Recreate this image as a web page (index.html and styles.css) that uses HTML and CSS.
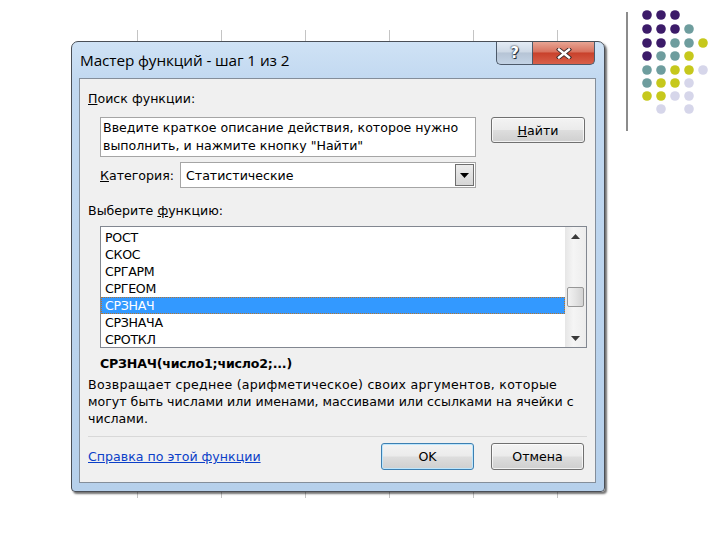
FILE: index.html
```html
<!DOCTYPE html>
<html>
<head>
<meta charset="utf-8">
<link rel="stylesheet" href="styles.css">
</head>
<body>
<div class="slide">
  <div class="deco-line"></div>
  <svg class="dots" width="72" height="112" viewBox="640 6 72 112">
    <g fill="#3c1b69">
      <circle cx="647" cy="15" r="4.8"/><circle cx="661" cy="15" r="4.8"/><circle cx="675" cy="15" r="4.8"/>
      <circle cx="647" cy="29" r="4.8"/><circle cx="661" cy="29" r="4.8"/><circle cx="675" cy="29" r="4.8"/>
      <circle cx="647" cy="43" r="4.8"/><circle cx="661" cy="43" r="4.8"/>
      <circle cx="647" cy="56" r="4.8"/>
    </g>
    <g fill="#6e9d9e">
      <circle cx="689" cy="29" r="4.8"/>
      <circle cx="675" cy="43" r="4.8"/><circle cx="689" cy="43" r="4.8"/>
      <circle cx="661" cy="56" r="4.8"/><circle cx="675" cy="56" r="4.8"/>
      <circle cx="647" cy="70" r="4.8"/><circle cx="661" cy="70" r="4.8"/>
      <circle cx="647" cy="83" r="4.8"/>
    </g>
    <g fill="#c6c81c">
      <circle cx="703" cy="43" r="4.8"/>
      <circle cx="689" cy="56" r="4.8"/>
      <circle cx="675" cy="70" r="4.8"/><circle cx="689" cy="70" r="4.8"/>
      <circle cx="661" cy="83" r="4.8"/><circle cx="675" cy="83" r="4.8"/>
      <circle cx="647" cy="96" r="4.8"/><circle cx="661" cy="96" r="4.8"/>
    </g>
    <g fill="#d6d6ea">
      <circle cx="703" cy="70" r="4.8"/>
      <circle cx="689" cy="83" r="4.8"/>
      <circle cx="675" cy="96" r="4.8"/><circle cx="689" cy="96" r="4.8"/>
      <circle cx="661" cy="109" r="4.8"/><circle cx="689" cy="109" r="4.8"/>
    </g>
  </svg>

  <div class="shot">
    <div class="dialog">
      <div class="titlebar">
        <span class="title">Мастер функций - шаг 1 из 2</span>
        <div class="caption-btns">
          <div class="cbtn help">?</div>
          <div class="cbtn close">
            <svg width="16" height="11" viewBox="0 0 16 11"><path d="M3 1.5 L13 9.5 M13 1.5 L3 9.5" stroke="#3a2a2a" stroke-width="4.2" stroke-linecap="square"/><path d="M3 1.5 L13 9.5 M13 1.5 L3 9.5" stroke="#ffffff" stroke-width="2.4" stroke-linecap="square"/></svg>
          </div>
        </div>
      </div>
      <div class="panel">
        <div class="label"><u>П</u>оиск функции:</div>
        <div class="search-row">
          <div class="search-box">Введите краткое описание действия, которое нужно<br>выполнить, и нажмите кнопку "Найти"</div>
          <div class="btn find"><u>Н</u>айти</div>
        </div>
        <div class="cat-row">
          <span class="cat-label"><u>К</u>атегория:</span>
          <div class="combo">
            <span class="combo-text">Статистические</span>
            <div class="combo-btn"><svg width="9" height="5" viewBox="0 0 9 5"><path d="M0 0 H9 L4.5 5 Z" fill="#000"/></svg></div>
          </div>
        </div>
        <div class="label choose">Выберите <u>ф</u>ункцию:</div>
        <div class="listbox">
          <ul class="items">
            <li>РОСТ</li>
            <li>СКОС</li>
            <li>СРГАРМ</li>
            <li>СРГЕОМ</li>
            <li class="sel">СРЗНАЧ</li>
            <li>СРЗНАЧА</li>
            <li>СРОТКЛ</li>
          </ul>
          <div class="scrollbar">
            <svg class="arrow" width="9" height="5" viewBox="0 0 9 5"><path d="M0 5 H9 L4.5 0 Z" fill="#3a3a3a"/></svg>
            <div class="track"><div class="thumb"></div></div>
            <svg class="arrow" width="9" height="5" viewBox="0 0 9 5"><path d="M0 0 H9 L4.5 5 Z" fill="#3a3a3a"/></svg>
          </div>
        </div>
        <div class="sig">СРЗНАЧ(число1;число2;...)</div>
        <div class="desc"><span class="desc-wide">Возвращает среднее (арифметическое) своих аргументов, которые</span><br>могут быть числами или именами, массивами или ссылками на ячейки с<br>числами.</div>
        <div class="sep"></div>
        <div class="footer">
          <a class="help-link">Справка по этой функции</a>
          <div class="btns">
            <div class="btn ok">OK</div>
            <div class="btn">Отмена</div>
          </div>
        </div>
      </div>
    </div>
  </div>
</div>
</body>
</html>
```

FILE: styles.css
```css
html, body {
  margin: 0;
  padding: 0;
}
body {
  width: 720px;
  height: 540px;
  background: #ffffff;
  overflow: hidden;
  font-family: "DejaVu Sans", sans-serif;
  font-size: 12.6px;
  color: #000;
}
.slide {
  position: relative;
  width: 720px;
  height: 540px;
  display: flex;
  flex-direction: column;
}
.deco-line {
  position: absolute;
  left: 626px;
  top: 12px;
  width: 2px;
  height: 119px;
  background: #8c8c8c;
}
.dots {
  position: absolute;
  left: 640px;
  top: 6px;
}
.shot {
  margin: 30px 0 0 70px;
  width: 536px;
  height: 468px;
  box-sizing: border-box;
  padding: 11px 0 0 1px;
  background-color: #fff;
  background-image: linear-gradient(to right, #c4c4c4 1px, transparent 1px);
  background-size: 84px 100%;
  background-position: 67px 0;
}
.dialog {
  width: 534px;
  height: 451px;
  box-sizing: border-box;
  border: 1px solid #4a4f57;
  border-radius: 7px 7px 4px 4px;
  background: linear-gradient(to bottom, #cfe2f5 0, #c1d8f0 40px, #b6d0eb 100%);
  box-shadow: 2px 2px 2px rgba(0,0,0,0.55);
  padding: 0 8px 8px 7px;
  display: flex;
  flex-direction: column;
}
.titlebar {
  height: 36px;
  display: flex;
  align-items: center;
  justify-content: space-between;
  padding-left: 1px;
  position: relative;
}
.title {
  font-family: "Open Sans", "DejaVu Sans", sans-serif;
  font-size: 15.3px;
  color: #000;
  letter-spacing: -0.1px;
}
.caption-btns {
  align-self: flex-start;
  display: flex;
  margin-right: 1px;
}
.cbtn {
  height: 22px;
  border: 1px solid #4d5a6a;
  border-top: none;
  display: flex;
  align-items: center;
  justify-content: center;
}
.help {
  width: 35px;
  border-radius: 0 0 0 5px;
  border-right: none;
  background: linear-gradient(to bottom, #e3ebf4 0, #cdd8e5 45%, #b6c4d5 50%, #c3d3e5 100%);
  font-family: "DejaVu Sans", sans-serif;
  font-weight: bold;
  font-size: 15px;
  color: #fff;
  text-shadow: 0 0 2px #2c3440, 0 0 1px #2c3440, 1px 1px 0 #2c3440;
}
.close {
  width: 61px;
  border-radius: 0 0 5px 0;
  background: linear-gradient(to bottom, #e8a493 0, #d8725e 45%, #c8412b 50%, #d8604a 100%);
}
.panel {
  flex: 1;
  border: 1px solid #848e9a;
  background: #f0f0f0;
  display: flex;
  flex-direction: column;
}
.label {
  margin: 11px 0 0 8px;
  line-height: 18px;
}
.search-row {
  display: flex;
  align-items: flex-start;
  margin-top: 9px;
}
.search-box {
  margin-left: 20px;
  width: 376px;
  height: 40px;
  box-sizing: border-box;
  border: 1px solid #a5a5a5;
  background: #fff;
  padding: 1px 2px;
  line-height: 18px;
  white-space: nowrap;
  overflow: hidden;
}
.btn {
  box-sizing: border-box;
  width: 93px;
  height: 27px;
  border: 1px solid #707070;
  border-radius: 3px;
  background: linear-gradient(to bottom, #f3f3f3 0, #ebebeb 48%, #dddddd 52%, #cfcfcf 100%);
  box-shadow: inset 0 0 0 1px rgba(255,255,255,0.7);
  display: flex;
  align-items: center;
  justify-content: center;
}
.find {
  margin-left: 15px;
  width: 94px;
  height: 26px;
}
.cat-row {
  display: flex;
  align-items: center;
  margin-top: 5px;
}
.cat-label {
  margin-left: 20px;
  width: 80px;
}
.combo {
  width: 296px;
  height: 26px;
  box-sizing: border-box;
  border: 1px solid #a5a5a5;
  background: #fff;
  display: flex;
  align-items: center;
  justify-content: space-between;
}
.combo-text {
  padding-left: 5px;
}
.combo-btn {
  width: 19px;
  height: 22px;
  margin-right: 1px;
  box-sizing: border-box;
  border: 1px solid #6e6e6e;
  background: linear-gradient(to bottom, #ececec, #d6d6d6);
  display: flex;
  align-items: center;
  justify-content: center;
}
.choose {
  margin-top: 14px;
}
.listbox {
  margin: 6px 0 0 20px;
  width: 487px;
  height: 122px;
  box-sizing: border-box;
  border: 1px solid #828790;
  background: #fff;
  display: flex;
}
.items {
  list-style: none;
  margin: 0;
  padding: 2px 0 0 0;
  flex: 1;
}
.items li {
  height: 17px;
  line-height: 17px;
  padding-left: 4px;
  letter-spacing: -0.3px;
}
.items li.sel {
  background: #3399ff;
  color: #fff;
  outline: 1px dotted #b7742e;
  outline-offset: -1px;
}
.scrollbar {
  width: 21px;
  background: linear-gradient(to right, #e6e6e6, #f5f5f5 40%, #ececec);
  display: flex;
  flex-direction: column;
  align-items: center;
  padding: 7px 0 6px;
  box-sizing: border-box;
}
.track {
  flex: 1;
  width: 100%;
  position: relative;
}
.thumb {
  position: absolute;
  left: 2px;
  right: 2px;
  top: 48px;
  height: 20px;
  border: 1px solid #979797;
  border-radius: 2px;
  box-sizing: border-box;
  background: linear-gradient(to right, #f2f2f2, #e4e4e4 50%, #d3d3d3);
}
.sig {
  margin: 7px 0 0 20px;
  line-height: 18px;
  font-weight: bold;
  letter-spacing: -0.2px;
}
.desc {
  margin: 3px 0 0 8px;
  line-height: 17px;
  white-space: nowrap;
}
.desc-wide {
  letter-spacing: 0.25px;
}
.sep {
  margin: 9px 0 0 8px;
  width: 499px;
  height: 1px;
  background: #d8d8d8;
}
.footer {
  margin: 6px 11px 0 8px;
  display: flex;
  align-items: center;
  justify-content: space-between;
}
.help-link {
  color: #0b3fc8;
  text-decoration: underline;
}
.btns {
  display: flex;
  gap: 17px;
}
.ok {
  border-color: #3c7fb1;
  box-shadow: inset 0 0 0 1px #bde6fd;
}
```
